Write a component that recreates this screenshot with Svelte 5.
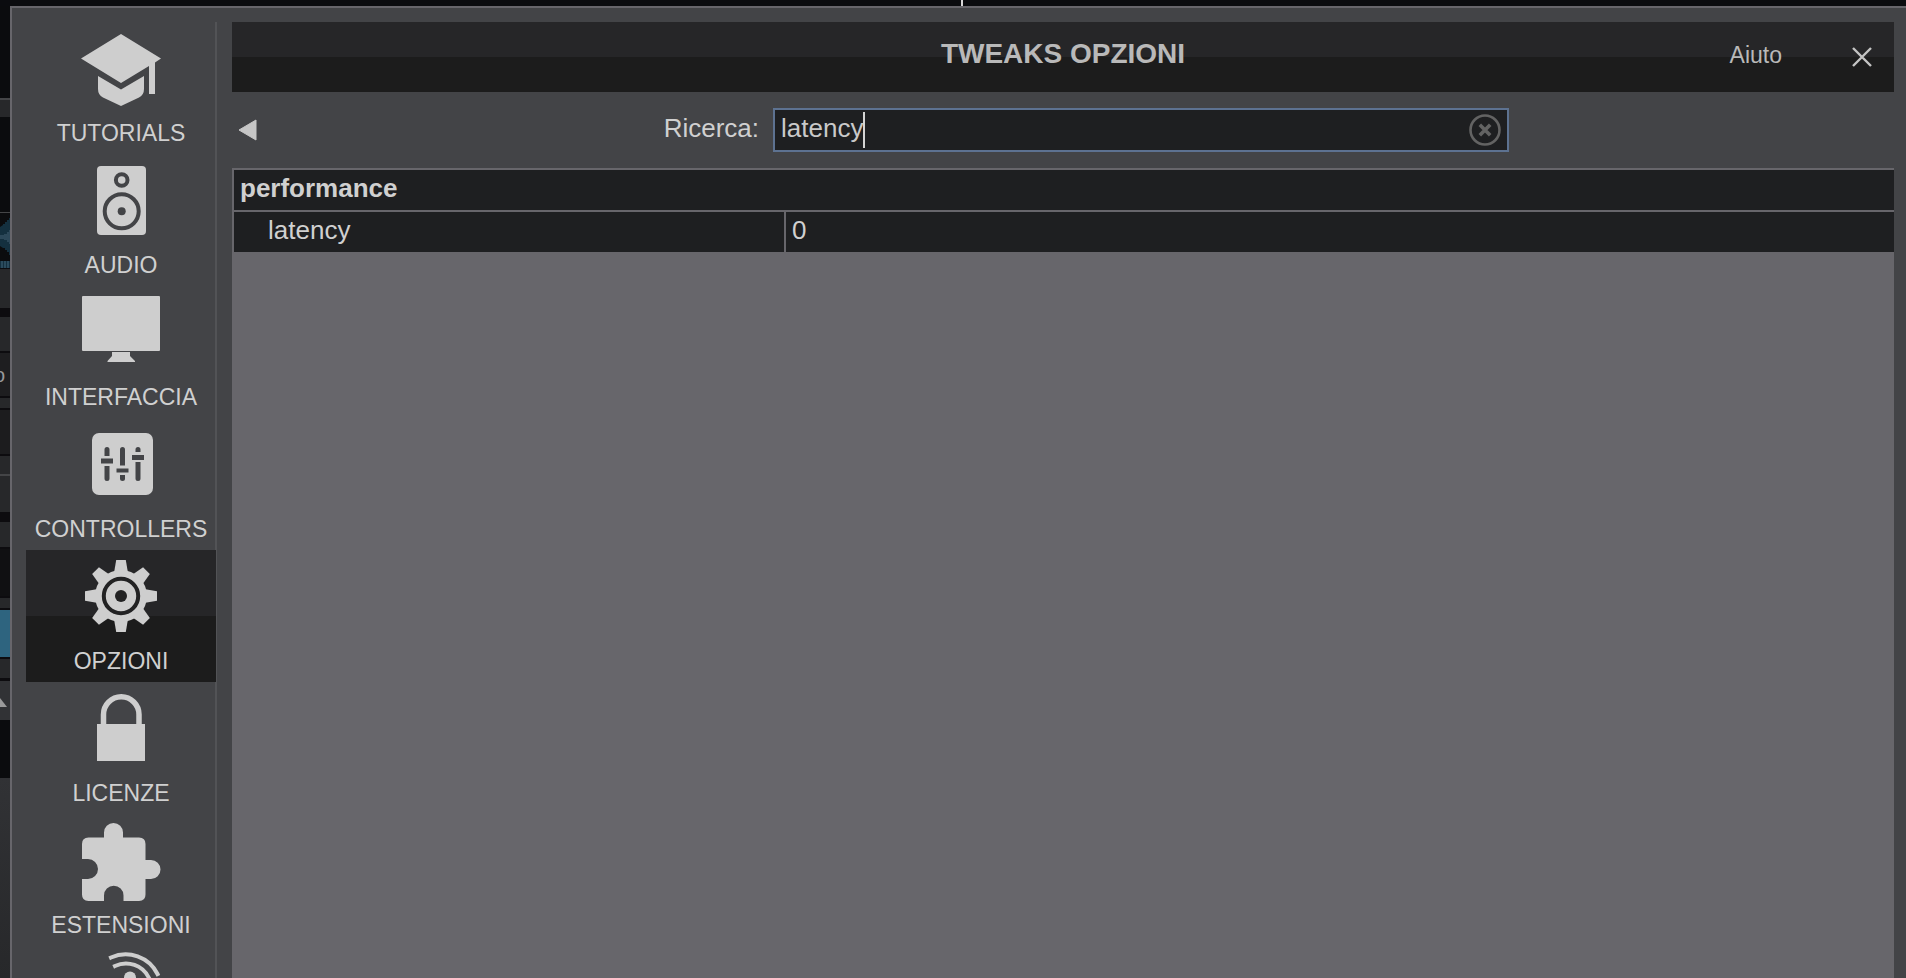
<script lang="ts">
	import { onMount } from "svelte";

	type Item = { id: string; label: string };

	const items: Item[] = [
		{ id: "tutorials", label: "TUTORIALS" },
		{ id: "audio", label: "AUDIO" },
		{ id: "interface", label: "INTERFACCIA" },
		{ id: "controllers", label: "CONTROLLERS" },
		{ id: "options", label: "OPZIONI" },
		{ id: "licenses", label: "LICENZE" },
		{ id: "extensions", label: "ESTENSIONI" },
		{ id: "remote", label: "" },
	];

	// slice of the deck panels left uncovered by the settings window
	const strips = [
		{ h: 92, kind: "black" },
		{ h: 2, kind: "line" },
		{ h: 17, kind: "panel" },
		{ h: 95, kind: "black" },
		{ h: 1, kind: "line" },
		{ h: 48, kind: "wave" },
		{ h: 7, kind: "beats" },
		{ h: 1, kind: "gap" },
		{ h: 39, kind: "panel" },
		{ h: 9, kind: "gap" },
		{ h: 34, kind: "panel" },
		{ h: 2, kind: "gap" },
		{ h: 43, kind: "text" },
		{ h: 2, kind: "gap" },
		{ h: 10, kind: "panel" },
		{ h: 2, kind: "gap" },
		{ h: 44, kind: "dark" },
		{ h: 2, kind: "gap" },
		{ h: 18, kind: "panel" },
		{ h: 2, kind: "line" },
		{ h: 36, kind: "panel" },
		{ h: 10, kind: "gap" },
		{ h: 25, kind: "panel" },
		{ h: 2, kind: "gap" },
		{ h: 47, kind: "deep" },
		{ h: 2, kind: "gap" },
		{ h: 10, kind: "panel" },
		{ h: 2, kind: "gap" },
		{ h: 47, kind: "blue" },
		{ h: 2, kind: "gap" },
		{ h: 19, kind: "panel" },
		{ h: 3, kind: "gap" },
		{ h: 39, kind: "sort" },
		{ h: 58, kind: "black" },
	];

	const teeth = [0, 45, 90, 135, 180, 225, 270, 315];

	let active = $state("options");
	let query = $state("latency");
	let field: HTMLInputElement;
	let ctx: CanvasRenderingContext2D | null = $state(null);

	let caretX = $derived.by(() => {
		const text = query;
		return ctx ? Math.round(ctx.measureText(text).width) : 0;
	});

	onMount(() => {
		const c = document.createElement("canvas").getContext("2d");
		if (c) c.font = getComputedStyle(field).font;
		ctx = c;
	});
</script>

<div class="desktop">
	<div class="topline"><span class="playhead"></span></div>
	<div class="behind" aria-hidden="true">
		{#each strips as s}
			<div class="strip {s.kind}" style="height: {s.h}px">
				{#if s.kind === "text"}
					<span>o</span>
				{:else if s.kind === "wave"}
					<svg width="10" height="48" viewBox="0 0 10 48">
						<path d="M0 14L3 12V11H5V9H7V7H9V5H10V42H9V39H7V37H5V35H3L0 33Z" fill="#14303f" />
						<path d="M0 22H4V21H7V19H9V17H10V31H9V29H7V27H4V26H0Z" fill="#2c4859" />
					</svg>
				{:else if s.kind === "sort"}
					<svg width="10" height="39" viewBox="0 0 10 39">
						<path d="M0 17L7 26H0Z" fill="#9a9a9b" />
					</svg>
				{/if}
			</div>
		{/each}
		<div class="strip rest"></div>
	</div>

	<div class="window">
		<nav class="sidebar">
			{#each items as item}
				<button
					class="item"
					class:active={active === item.id}
					aria-label={item.label || item.id}
					onclick={() => (active = item.id)}
				>
					<svg class="icon" width="80" height="98" viewBox="0 0 80 98" aria-hidden="true">
						{#if item.id === "tutorials"}
							<path d="M40 12L80 36.600L74 40.500V72H68V44L40 61L0 36.600Z" />
							<path d="M17 54L40 67.500L63 54V67Q63 73 58 75.500L40 84L22 75.500Q17 73 17 67Z" />
						{:else if item.id === "audio"}
							<rect x="16" y="12" width="49" height="69" rx="4" />
							<circle class="cut-line" cx="40.700" cy="26" r="5.800" />
							<circle class="cut-line" cx="40.700" cy="57.300" r="17" />
							<circle class="cut" cx="40.700" cy="57.300" r="4" />
						{:else if item.id === "interface"}
							<rect x="1" y="10" width="78" height="55" rx="1" />
							<path d="M31 66H49V70L54 75V76H26.500V75L31 70Z" />
						{:else if item.id === "controllers"}
							<rect x="11" y="15" width="61" height="62" rx="7" />
							<g class="cut">
								<path d="M23.500 38V31.500a2.500 2.500 0 0 1 5 0V38Z" />
								<path d="M20 40.500H32V45.500H20Z" />
								<path d="M23.500 48H28.500V60.500a2.500 2.500 0 0 1-5 0Z" />
								<path d="M39 47.500V31.500a2.500 2.500 0 0 1 5 0V47.500Z" />
								<path d="M35.500 50.500H47.500V54.500H35.500Z" />
								<path d="M39 57H44V60.500a2.500 2.500 0 0 1-5 0Z" />
								<path d="M54.500 34V31.500a2.500 2.500 0 0 1 5 0V34Z" />
								<path d="M51 37H63V42H51Z" />
								<path d="M54.500 44H59.500V60.500a2.500 2.500 0 0 1-5 0Z" />
							</g>
						{:else if item.id === "options"}
							<circle cx="40" cy="46" r="26" />
							{#each teeth as a}
								<path d="M35.200 10H44.800L47 23H33Z" transform="rotate({a} 40 46)" />
							{/each}
							<circle class="cut-line" cx="40" cy="46" r="17.200" />
							<circle class="cut" cx="40" cy="46" r="6" />
						{:else if item.id === "licenses"}
							<rect x="16" y="42" width="48" height="37" />
							<path class="stroke lock" d="M22.500 43V32.500a17.750 17.750 0 0 1 35.500 0V43" />
						{:else if item.id === "extensions"}
							<path
								d="M1 30Q1 23.500 7.500 23.500H23V18.500a9.500 9.500 0 0 1 19 0V23.500H58Q64.500 23.500 64.500 30V46H70a9.500 9.500 0 0 1 0 19H64.500V80.500Q64.500 87 58 87H42.500V81.500a9.750 9.750 0 0 0-19.500 0V87H7.500Q1 87 1 80.500V65H7a10 10 0 0 0 0-20H1Z"
							/>
						{:else}
							<path class="stroke" d="M30 11.500A35.500 35.500 0 0 1 76.500 28" />
							<path class="stroke" d="M34 20A25.500 25.500 0 0 1 68 32" />
							<circle cx="49" cy="31.500" r="6" />
							<path d="M46 34H52L62 80H36Z" />
						{/if}
					</svg>
					<span class="label">{item.label}</span>
				</button>
			{/each}
		</nav>

		<main class="main">
			<header class="titlebar">
				<h1>TWEAKS OPZIONI</h1>
				<div class="actions">
					<button class="help">Aiuto</button>
					<button class="close" aria-label="Chiudi">
						<svg width="20" height="20" viewBox="0 0 20 20">
							<path d="M1 1L19 19M19 1L1 19" fill="none" stroke="#c4c4c4" stroke-width="2.400" />
						</svg>
					</button>
				</div>
			</header>

			<div class="search">
				<div class="search-left">
					<button class="back" aria-label="Indietro">
						<svg width="19" height="22" viewBox="0 0 19 22">
							<path d="M1 11L18 1V21Z" fill="#c6c6c6" stroke="#c6c6c6" stroke-linejoin="round" />
						</svg>
					</button>
					<label for="query">Ricerca:</label>
				</div>
				<div class="field">
					<input id="query" type="text" autocomplete="off" spellcheck="false" bind:value={query} bind:this={field} />
					<span class="caret" style="left: {caretX + 6}px"></span>
					<button class="clear" aria-label="Cancella" onclick={() => (query = "")}>
						<svg width="32" height="32" viewBox="0 0 32 32" fill="none" stroke="#636363">
							<circle cx="16" cy="16" r="14.500" stroke-width="2.600" />
							<path d="M10.800 10.800L21.200 21.200M21.200 10.800L10.800 21.200" stroke-width="3.600" />
						</svg>
					</button>
				</div>
			</div>

			<div class="list">
				<table>
					<colgroup>
						<col class="name-col" />
						<col />
					</colgroup>
					<tbody>
						<tr><th colspan="2" scope="colgroup">performance</th></tr>
						<tr>
							<td class="name">latency</td>
							<td>0</td>
						</tr>
					</tbody>
				</table>
			</div>
		</main>
	</div>
</div>

<style>
	:global(body) {
		margin: 0;
		background: #0b0c0f;
	}
	.desktop {
		display: grid;
		grid-template-columns: 10px 1fr;
		grid-template-rows: 6px minmax(0, 1fr);
		height: 100vh;
		overflow: hidden;
		font-family: "Liberation Sans", Arial, sans-serif;
		font-size: 26px;
		line-height: 30px;
		color: #d0d0d0;
	}
	button {
		padding: 0;
		border: 0;
		background: none;
		color: inherit;
		font: inherit;
	}
	svg {
		display: block;
	}

	/* background application */
	.topline {
		grid-column: 1 / -1;
		position: relative;
		background: #0b0c0f;
	}
	.playhead {
		position: absolute;
		left: calc(50% + 8px);
		width: 2px;
		height: 6px;
		background: #d8d8d8;
	}
	.behind {
		display: flex;
		flex-direction: column;
		overflow: hidden;
	}
	.strip {
		flex: none;
		overflow: hidden;
	}
	.black,
	.wave {
		background: #0b0c0e;
	}
	.line {
		background: #444547;
	}
	.panel {
		background: #27282a;
	}
	.gap {
		background: #0d0c0f;
	}
	.beats {
		background: repeating-linear-gradient(90deg, #14303f 0 1px, #2b4b5d 1px 3px);
	}
	.text {
		display: flex;
		justify-content: flex-end;
		align-items: center;
		padding-right: 5px;
		box-sizing: border-box;
		background: #1e1e20;
		color: #98989a;
		font-size: 20px;
	}
	.dark {
		background: #1c1c1e;
	}
	.deep {
		background: #101012;
	}
	.blue {
		background: #2e647f;
	}
	.sort {
		background: #313235;
	}
	.rest {
		flex: 1;
		background: linear-gradient(#313235, #27282a);
	}

	/* settings window */
	.window {
		display: flex;
		min-width: 0;
		border: solid #67666b;
		border-width: 2px 0 0 2px;
		background: #434447;
		overflow: hidden;
	}
	.sidebar {
		flex: none;
		width: 189px;
		margin: 14px 0 0 14px;
		border-right: 2px solid #525356;
	}
	.item {
		display: flex;
		flex-direction: column;
		align-items: center;
		width: 190px;
		height: 132px;
		--cut: #434447;
	}
	.item.active {
		background: linear-gradient(#262628 50%, #1c1c1c 50%);
		--cut: #222223;
	}
	.icon {
		flex: none;
		fill: #cecece;
	}
	.cut {
		fill: var(--cut);
	}
	.cut-line {
		fill: none;
		stroke: var(--cut);
		stroke-width: 4;
	}
	.stroke {
		fill: none;
		stroke: #cecece;
		stroke-width: 4;
		stroke-linecap: square;
	}
	.lock {
		stroke-width: 5.5;
		stroke-linecap: butt;
	}
	.label {
		font-size: 23px;
		line-height: 26px;
	}

	.main {
		flex: 1;
		min-width: 0;
		display: flex;
		flex-direction: column;
		padding: 14px 12px 0 15px;
	}
	.titlebar {
		flex: none;
		display: grid;
		grid-template-columns: 1fr auto 1fr;
		align-items: center;
		height: 70px;
		background: linear-gradient(#262628 50%, #1c1c1c 50%);
		color: #b9b9b9;
	}
	h1 {
		grid-column: 2;
		margin: 0;
		padding-bottom: 6px;
		font-size: 28px;
		line-height: 32px;
	}
	.actions {
		display: flex;
		justify-content: flex-end;
		align-items: center;
		gap: 70px;
		padding-right: 22px;
	}
	.help {
		padding-bottom: 4px;
		font-size: 23px;
		line-height: 26px;
	}

	.search {
		flex: none;
		display: grid;
		grid-template-columns: 541fr 736fr 385fr;
		align-items: center;
		height: 76px;
	}
	.search-left {
		display: flex;
		justify-content: space-between;
		align-items: center;
		padding: 0 14px 0 6px;
	}
	label {
		padding-bottom: 4px;
	}
	.field {
		position: relative;
		display: flex;
		align-items: center;
		height: 44px;
		box-sizing: border-box;
		border: 2px solid #5d7291;
		background: #1e1f21;
	}
	input {
		flex: 1;
		min-width: 0;
		height: 40px;
		box-sizing: border-box;
		padding: 0 0 4px 6px;
		border: 0;
		outline: 0;
		background: none;
		color: #c9c9c9;
		caret-color: transparent;
		font: inherit;
	}
	.caret {
		position: absolute;
		top: 2px;
		width: 2px;
		height: 36px;
		background: #d4d4d4;
		pointer-events: none;
	}
	.clear {
		flex: none;
		margin-right: 6px;
	}

	.list {
		flex: 1;
		min-height: 0;
		padding: 2px 0 0 2px;
		background: #67666b;
	}
	table {
		width: 100%;
		table-layout: fixed;
		border-spacing: 0;
	}
	.name-col {
		width: 552px;
	}
	th,
	td {
		box-sizing: border-box;
		height: 40px;
		padding: 0 6px 4px;
		background: #1e1f21;
		text-align: left;
	}
	th {
		height: 42px;
		border-bottom: 2px solid #67666b;
	}
	.name {
		padding-left: 34px;
		border-right: 2px solid #67666b;
	}
</style>
